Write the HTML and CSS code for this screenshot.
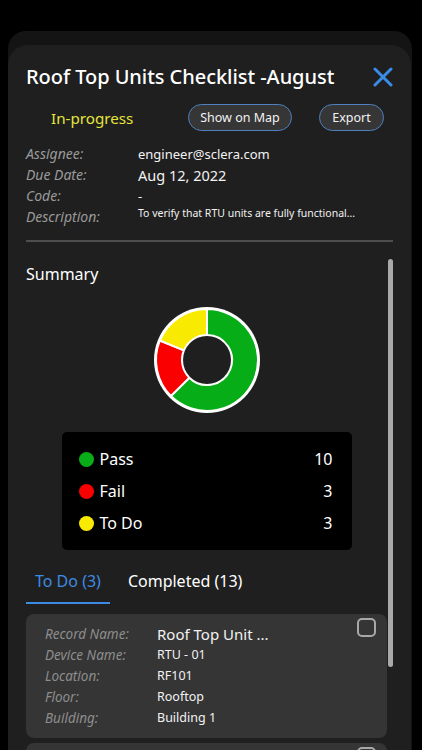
FILE: index.html
```html
<!DOCTYPE html>
<html>
<head>
<meta charset="utf-8">
<link rel="stylesheet" href="styles.css">
</head>
<body>
<div class="backlayer">
  <div class="sheet">
    <div class="header">
      <h1 class="title">Roof Top Units Checklist -August</h1>
      <svg class="close" width="20" height="20" viewBox="0 0 20 20"><path d="M2 2 L18 18 M18 2 L2 18" stroke="#3a8ce6" stroke-width="3" stroke-linecap="round"/></svg>
    </div>
    <div class="actions">
      <span class="status">In-progress</span>
      <button class="pill map">Show on Map</button>
      <button class="pill export">Export</button>
    </div>
    <div class="info">
      <div class="irow"><span class="ilabel">Assignee:</span><span class="ival">engineer@sclera.com</span></div>
      <div class="irow"><span class="ilabel">Due Date:</span><span class="ival date">Aug 12, 2022</span></div>
      <div class="irow"><span class="ilabel">Code:</span><span class="ival">-</span></div>
      <div class="irow"><span class="ilabel">Description:</span><span class="ival desc">To verify that RTU units are fully functional...</span></div>
    </div>
    <div class="divider"></div>
    <div class="scrollarea">
      <div class="content">
        <div class="summary">Summary</div>
        <div class="donutwrap">
          <svg width="110" height="110" viewBox="-55 -55 110 110">
            <circle r="53" fill="#ffffff"/>
            <path d="M0 -51 A51 51 0 1 1 -36.06 36.06 L-17.68 17.68 A25 25 0 1 0 0 -25 Z" fill="#07ad17" stroke="#fff" stroke-width="2" stroke-linejoin="round"/>
            <path d="M-36.06 36.06 A51 51 0 0 1 -47.12 -19.52 L-23.10 -9.57 A25 25 0 0 0 -17.68 17.68 Z" fill="#fb0000" stroke="#fff" stroke-width="2" stroke-linejoin="round"/>
            <path d="M-47.12 -19.52 A51 51 0 0 1 0 -51 L0 -25 A25 25 0 0 0 -23.10 -9.57 Z" fill="#f8ea00" stroke="#fff" stroke-width="2" stroke-linejoin="round"/>
            <circle r="24" fill="#1f1f1f"/>
          </svg>
        </div>
        <div class="legend">
          <div class="lrow"><span class="dot green"></span><span class="lname">Pass</span><span class="lnum">10</span></div>
          <div class="lrow"><span class="dot red"></span><span class="lname">Fail</span><span class="lnum">3</span></div>
          <div class="lrow"><span class="dot yellow"></span><span class="lname">To Do</span><span class="lnum">3</span></div>
        </div>
        <div class="tabs">
          <div class="tab active">To Do (3)</div>
          <div class="tab">Completed (13)</div>
        </div>
        <div class="card">
          <div class="crows">
            <div class="crow"><span class="clabel">Record Name:</span><span class="cval big">Roof Top Unit ...</span></div>
            <div class="crow"><span class="clabel">Device Name:</span><span class="cval">RTU - 01</span></div>
            <div class="crow"><span class="clabel">Location:</span><span class="cval">RF101</span></div>
            <div class="crow"><span class="clabel">Floor:</span><span class="cval">Rooftop</span></div>
            <div class="crow"><span class="clabel">Building:</span><span class="cval">Building 1</span></div>
          </div>
          <span class="check"></span>
        </div>
        <div class="card peek">
          <div class="crows"></div>
          <span class="check"></span>
        </div>
      </div>
      <div class="scrolltrack"><div class="thumb"></div></div>
    </div>
  </div>
</div>
</body>
</html>
```
FILE: styles.css
```css
* { box-sizing: border-box; }
html, body { margin: 0; padding: 0; background: #000; height: 750px; overflow: hidden; }
body { font-family: "Noto Sans", "Open Sans", sans-serif; color: #fff; }

.backlayer {
  margin: 31px 10px 0 8px;
  background: #141414;
  border-radius: 18px 18px 0 0;
  height: 719px;
  padding-top: 14px;
}
.sheet {
  width: 403px;
  height: 705px;
  background: #1f1f1f;
  border-radius: 20px 20px 0 0;
  padding: 20px 18px 0 18px;
  overflow: hidden;
}
.header { display: flex; align-items: center; justify-content: space-between; height: 24px; }
.title { margin: 0; font-size: 20px; font-weight: 500; line-height: 24px; letter-spacing: -0.05px; }
.close { display: block; }

.actions { display: flex; align-items: center; margin-top: 15px; height: 27px; }
.status { color: #e4e43c; font-size: 15.2px; margin-left: 25px; width: 137px; }
.pill {
  font-family: inherit;
  height: 27px;
  border-radius: 14px;
  border: 1.5px solid #4f80bf;
  background: #363636;
  color: #f2f2f2;
  font-size: 12.5px;
  padding: 0;
}
.map { width: 104px; }
.export { width: 65px; margin-left: 27px; }

.info { margin-top: 12px; }
.irow { display: flex; height: 21px; align-items: center; }
.ilabel { width: 112px; color: #9a9a9a; font-style: italic; font-size: 14px; }
.ival { font-size: 13px; color: #f2f2f2; }
.date { font-size: 14.5px; }
.desc { font-size: 10.5px; align-self: flex-start; line-height: 12px; margin-top: 1px; }

.divider { height: 2px; background: #4e4e4e; margin-top: 13px; }

.scrollarea { display: flex; margin-top: 17px; }
.content { width: 361px; flex: none; }
.scrolltrack { width: 5px; margin-left: 1px; }
.thumb { height: 408px; background: #a9a9a9; border-radius: 3px; }

.summary { font-size: 16px; line-height: 20px; margin-top: 5px; }
.donutwrap { display: flex; justify-content: center; margin-top: 21px; }
.donutwrap svg { display: block; }

.legend {
  width: 290px;
  margin: 17px auto 0;
  background: #000;
  border-radius: 5px;
  padding: 11px 19px 11px 17px;
}
.lrow { display: flex; align-items: center; height: 32px; }
.dot { width: 15px; height: 15px; border-radius: 50%; margin-right: 6px; }
.green { background: #09ad19; }
.red { background: #fb0000; }
.yellow { background: #f8ea00; }
.lname { font-size: 16px; flex: 1; }
.lnum { font-size: 16px; }

.tabs { display: flex; margin-top: 21px; }
.tab { font-size: 16px; line-height: 20px; padding: 0 9px 11px; border-bottom: 2px solid transparent; }
.tab + .tab { margin-left: 9px; }
.tab.active { color: #3d8be3; border-bottom-color: #3d8be3; }

.card {
  display: flex;
  justify-content: space-between;
  background: #353535;
  border-radius: 8px;
  padding: 9px 11px 10px 19px;
  margin-top: 10px;
}
.card.peek { margin-top: 5px; height: 40px; }
.crow { display: flex; align-items: center; height: 21px; }
.clabel { width: 112px; color: #8d8d8d; font-style: italic; font-size: 13.5px; }
.cval { font-size: 12.5px; color: #f2f2f2; }
.cval.big { font-size: 15px; }
.check { width: 19px; height: 19px; border: 2px solid #a8a8a8; border-radius: 5px; margin-top: -5px; flex: none; }
```
